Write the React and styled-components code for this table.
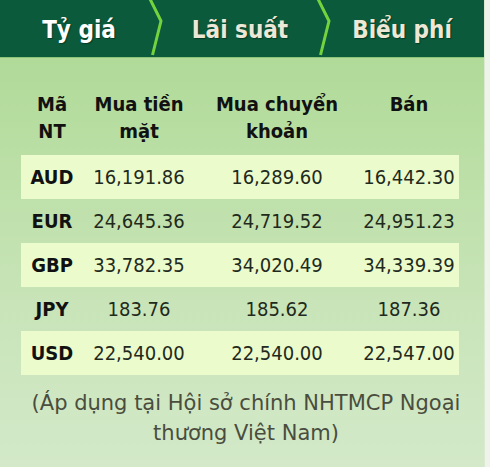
import React from "react";
import styled, { createGlobalStyle } from "styled-components";

const Global = createGlobalStyle`
  *, *::before, *::after { box-sizing: border-box; }
  html, body { margin: 0; padding: 0; background: #eef4ea; }
  body { font-family: "DejaVu Sans Condensed", "DejaVu Sans", sans-serif; font-stretch: condensed; }
`;

const Panel = styled.div`
  width: 485px;
  height: 467px;
  border-right: 1px solid #dbe9d3;
  background: linear-gradient(180deg, #aad891 0%, #bbdfa6 35%, #c8e4b8 65%, #d3e9c9 100%);
  display: flex;
  flex-direction: column;
`;

const TabBar = styled.div`
  height: 57px;
  background: #0a5a3b;
  display: flex;
  align-items: stretch;
  box-shadow: 0 1px 0 #8fc57a;
`;

const Tab = styled.div`
  flex: ${(p) => (p.$w ? `0 0 ${p.$w}px` : "1 1 auto")};
  display: flex;
  align-items: center;
  justify-content: center;
  padding-left: ${(p) => p.$pl || 0}px;
  padding-right: ${(p) => p.$pr || 0}px;
  padding-top: 3px;
  font-size: 24px;
  font-weight: bold;
  color: ${(p) => (p.$active ? "#ffffff" : "#ede8d6")};
  text-shadow: 1px 1px 1px rgba(0, 0, 0, 0.35);
`;

const Chevron = () => (
  <svg width="16" height="57" viewBox="0 0 16 57" style={{ flex: "0 0 16px" }}>
    <path d="M2 -1 L13 21 L4.5 55" fill="none" stroke="#74d23e" strokeWidth="3" strokeLinejoin="round" />
  </svg>
);

const Body = styled.div`
  padding: 34px 0 0 21px;
`;

const Table = styled.table`
  width: 438px;
  border-collapse: collapse;
  table-layout: fixed;
  font-size: 20px;
`;

const HeadCell = styled.th`
  font-weight: bold;
  color: #111;
  text-align: center;
  vertical-align: top;
  line-height: 27px;
  padding: 0 0 10px;
`;

const Row = styled.tr`
  background: ${(p) => (p.$alt ? "#ebfbcc" : "transparent")};
  height: 44px;
`;

const Code = styled.td`
  font-weight: bold;
  color: #111;
  text-align: center;
  padding: 0;
`;

const Num = styled.td`
  color: #1f2a1c;
  text-align: center;
  padding: 0;
`;

const Note = styled.div`
  padding: 13px 14px 0 22px;
  text-align: center;
  font-family: "DejaVu Sans", sans-serif;
  font-stretch: normal;
  font-size: 21px;
  line-height: 30px;
  color: #4a4d3e;
`;

const rows = [
  ["AUD", "16,191.86", "16,289.60", "16,442.30"],
  ["EUR", "24,645.36", "24,719.52", "24,951.23"],
  ["GBP", "33,782.35", "34,020.49", "34,339.39"],
  ["JPY", "183.76", "185.62", "187.36"],
  ["USD", "22,540.00", "22,540.00", "22,547.00"],
];

export default function App() {
  return (
    <>
      <Global />
      <Panel>
        <TabBar>
          <Tab $w={148} $pl={10} $active>Tỷ giá</Tab>
          <Chevron />
          <Tab $w={152}>Lãi suất</Tab>
          <Chevron />
          <Tab $pr={12}>Biểu phí</Tab>
        </TabBar>
        <Body>
          <Table>
            <colgroup>
              <col style={{ width: 62 }} />
              <col style={{ width: 112 }} />
              <col style={{ width: 164 }} />
              <col style={{ width: 100 }} />
            </colgroup>
            <thead>
              <tr>
                <HeadCell>Mã<br />NT</HeadCell>
                <HeadCell>Mua tiền<br />mặt</HeadCell>
                <HeadCell>Mua chuyển<br />khoản</HeadCell>
                <HeadCell>Bán</HeadCell>
              </tr>
            </thead>
            <tbody>
              {rows.map((r, i) => (
                <Row key={r[0]} $alt={i % 2 === 0}>
                  <Code>{r[0]}</Code>
                  <Num>{r[1]}</Num>
                  <Num>{r[2]}</Num>
                  <Num>{r[3]}</Num>
                </Row>
              ))}
            </tbody>
          </Table>
        </Body>
        <Note>(Áp dụng tại Hội sở chính NHTMCP Ngoại thương Việt Nam)</Note>
      </Panel>
    </>
  );
}
